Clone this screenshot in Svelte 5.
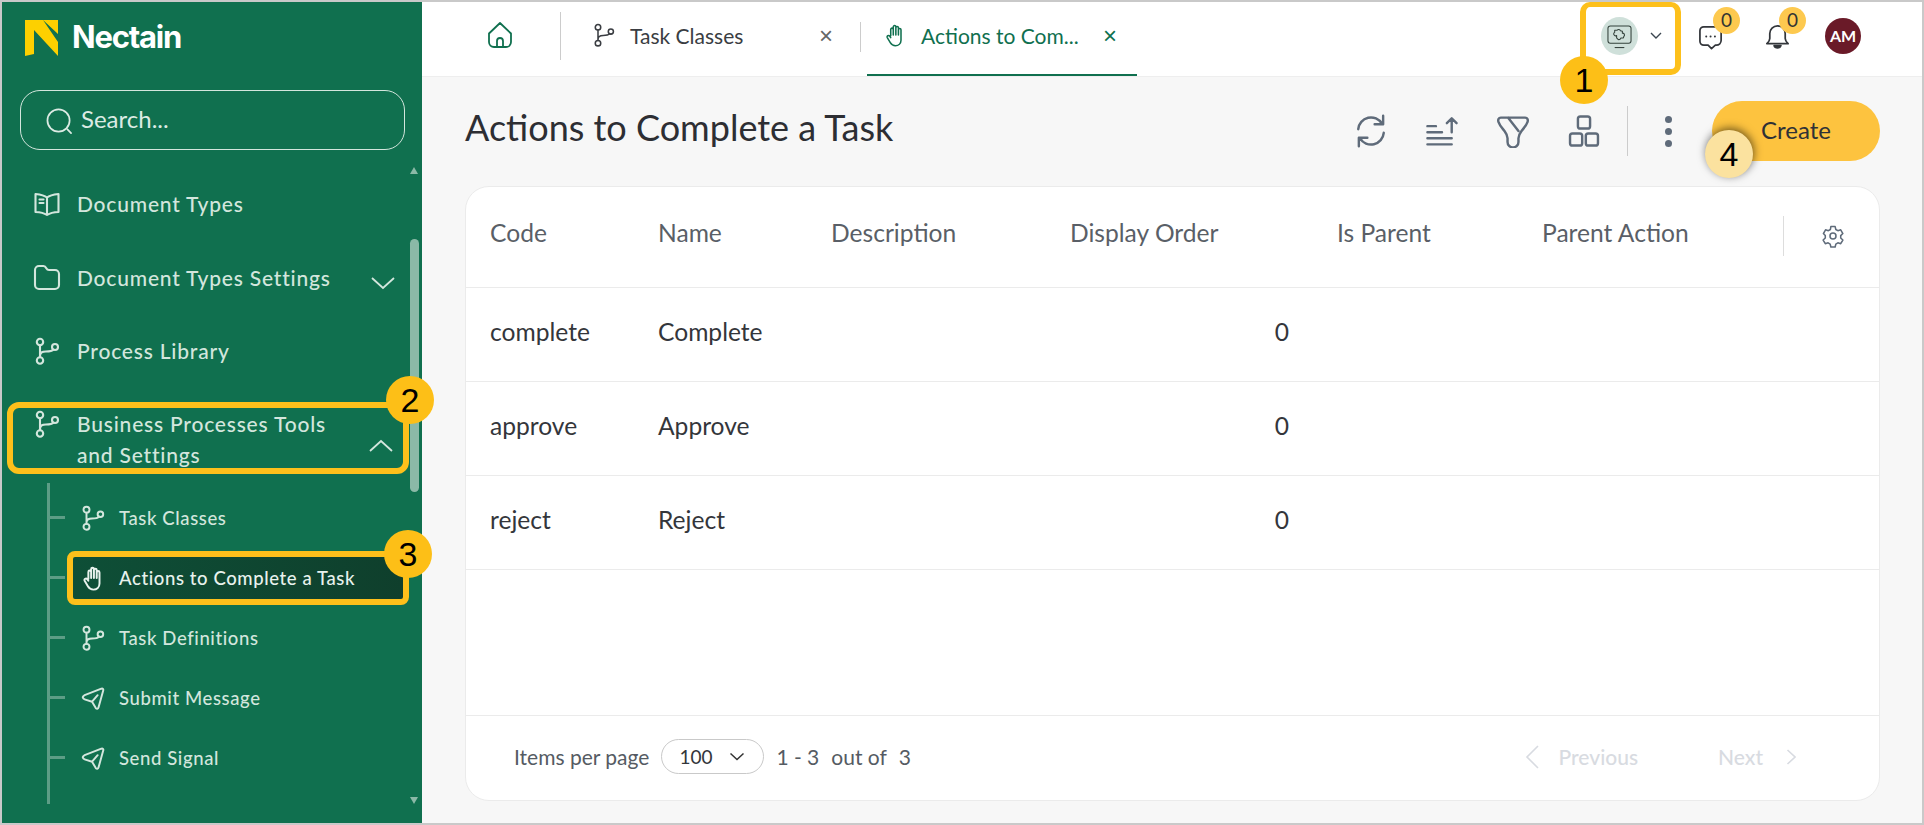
<script lang="ts">
	const columns = ['Code', 'Name', 'Description', 'Display Order', 'Is Parent', 'Parent Action'];
	const rows = [
		{ code: 'complete', name: 'Complete', order: 0 },
		{ code: 'approve', name: 'Approve', order: 0 },
		{ code: 'reject', name: 'Reject', order: 0 }
	];
	const subItems = [
		{ label: 'Task Classes', icon: 'branch' },
		{ label: 'Actions to Complete a Task', icon: 'hand', active: true },
		{ label: 'Task Definitions', icon: 'branch' },
		{ label: 'Submit Message', icon: 'send' },
		{ label: 'Send Signal', icon: 'send' }
	];
</script>

{#snippet icon(name: string, size = 28)}
	<svg class="icon" width={size} height={size} viewBox="0 0 28 28" fill="none" stroke="currentColor" stroke-width="1.8" stroke-linecap="round" stroke-linejoin="round">
		{#if name === 'branch'}
			<circle cx="7" cy="5" r="3.200" />
			<circle cx="7" cy="23.500" r="3.200" />
			<circle cx="22" cy="10" r="3" />
			<path d="M7 8.200V20.300M7 19c0-3.500 2-4.500 6-4.500 4 0 6.500-.8 7.500-2" />
		{:else if name === 'hand'}
			<path d="M9 15V7.500a1.500 1.500 0 0 1 3 0V14M12 13V4.500a1.500 1.500 0 0 1 3 0V14M15 13V5.500a1.500 1.500 0 0 1 3 0V14M18 14V8a1.500 1.500 0 0 1 3 0v12c0 4-3 6.500-6.500 6.500-3 0-4.500-1-6-3.500L5 17c-1-2 1.500-3.200 3-1.500l1 1.500" />
		{:else if name === 'send'}
			<path d="M3 13.500C3 12 4 11.500 5 11L23 4c1.500-.5 2.500.5 2 2l-5 18c-.5 2-2 2-3 .8l-4-6.800-8-2.500c-1-.3-2-1-2-2.500zM13 18l6-7" />
		{:else if name === 'book'}
			<path d="M14 7.500C11 5 7 4.500 2.500 4v18c4.500.2 8.500 1 11.500 3 3-2 7-2.800 11.500-3V4C21 4.500 17 5 14 7.500zM14 7.500V25M6.500 9.500h4M6.500 13h4" />
		{:else if name === 'folder'}
			<path d="M2 7a4 4 0 0 1 4-4h4.500c1.500 0 2.200 1 3 2.500.5 1 1.200 1.500 2.500 1.500h6a4 4 0 0 1 4 4v11a4 4 0 0 1-4 4H6a4 4 0 0 1-4-4z" />
		{:else if name === 'refresh'}
			<path d="M3.500 12.500A10.500 10.500 0 0 1 23 8M24.500 15.500A10.500 10.500 0 0 1 5 20M24 1.500V8.500H17M4 26.500V19.500H11" />
		{:else if name === 'sort'}
			<path d="M2 25h20M2 20h20M2 15h12M2 10h7M22 15V4M18 7.500 22 3.500l4 4" />
		{:else if name === 'funnel'}
			<path d="M4 3h20c2 0 2.500 2 2 3.500-1 3-3 5-5 7.500-1.500 2-2.500 3.500-2.500 6v3a4.500 4.500 0 0 1-9 0v-3c0-2.500-1-4-2.500-6-2-2.500-4-4.500-5-7.500C1.500 5 2 3 4 3zM10 3l8.500 11" />
		{:else if name === 'grid'}
			<rect x="9" y="2" width="10" height="10" rx="2" />
			<rect x="2.500" y="16" width="10" height="10" rx="2" />
			<rect x="15.500" y="16" width="10" height="10" rx="2" />
		{:else if name === 'gear'}
			<circle cx="14" cy="14" r="3.500" />
			<path d="M11.500 3h5l.8 3.400 2.400 1.400 3.300-1 2.500 4.300-2.500 2.400v2.800l2.500 2.400-2.500 4.300-3.300-1-2.400 1.400-.8 3.400h-5l-.8-3.400-2.400-1.400-3.300 1-2.500-4.300 2.500-2.400v-2.800L2.800 11.100l2.500-4.300 3.300 1 2.400-1.400z" />
		{:else if name === 'home'}
			<path d="M3 12.500 14 2l11 10.500V21a5 5 0 0 1-5 5H8a5 5 0 0 1-5-5zM11 26v-6a3 3 0 0 1 6 0v6" />
		{:else if name === 'chat'}
			<path d="M6 4h13a5 5 0 0 1 5 5v9a5 5 0 0 1-5 5h-1l-4 3.500L10.500 23H6a4 4 0 0 1-4-4V8a4 4 0 0 1 4-4z" />
			<path d="M8.500 14h.1M13 14h.1M17.500 14h.1" stroke-width="2" />
		{:else if name === 'bell'}
			<path d="M14 3a8 8 0 0 0-8 8v5c0 2-1.500 4-3 5.500h22c-1.500-1.500-3-3.500-3-5.500v-5a8 8 0 0 0-8-8z" />
			<path d="M10.500 23.500c1 3 6 3 7 0z" fill="currentColor" />
		{:else if name === 'search'}
			<circle cx="13" cy="13" r="11.500" />
			<path d="M22 22l4 4" />
		{/if}
	</svg>
{/snippet}

<div class="frame">
	<aside class="sidebar">
		<div class="brand">
			<svg width="33" height="36" viewBox="0 0 33 36"><path fill="#fdd000" d="M0 0h18l15 22v14L9 10v24l-9 2zM18 0h15v14z" /></svg>
			<span>Nectain</span>
		</div>
		<div class="search">
			<span class="search-icon">{@render icon('search', 27)}</span>
			<span class="search-text">Search...</span>
		</div>

		<nav class="nav">
			<div class="nav-item">{@render icon('book')}<span>Document Types</span></div>
			<div class="nav-item">
				{@render icon('folder')}<span>Document Types Settings</span>
				<svg class="chev" width="24" height="14" viewBox="0 0 24 14" fill="none" stroke="currentColor" stroke-width="1.800"><path d="M1 2l11 10L23 2" /></svg>
			</div>
			<div class="nav-item">{@render icon('branch')}<span>Process Library</span></div>
			<div class="nav-item open">
				{@render icon('branch')}<span>Business Processes Tools<br />and Settings</span>
				<svg class="chev" width="24" height="14" viewBox="0 0 24 14" fill="none" stroke="currentColor" stroke-width="1.800"><path d="M1 12 12 2l11 10" /></svg>
				<i class="mark mark-2">2</i>
			</div>
			<ul class="sub">
				{#each subItems as item}
					<li class:active={item.active}>
						<span class="tick"></span>
						<div class="sub-row">
							{@render icon(item.icon, 26)}<span>{item.label}</span>
							{#if item.active}<i class="mark mark-3">3</i>{/if}
						</div>
					</li>
				{/each}
			</ul>
		</nav>

		<div class="scrollbar">
			<span class="arrow up"></span>
			<span class="thumb"></span>
			<span class="arrow down"></span>
		</div>
	</aside>

	<main class="main">
		<header class="topbar">
			<div class="home">{@render icon('home', 28)}</div>
			<div class="tab">
				{@render icon('branch', 24)}
				<span class="tab-label">Task Classes</span>
				<span class="close">×</span>
			</div>
			<div class="tab current">
				{@render icon('hand', 24)}
				<span class="tab-label">Actions to Com...</span>
				<span class="close">×</span>
			</div>
			<div class="top-right">
				<div class="workspace">
					<span class="workspace-icon">
						<svg viewBox="0 0 26 26" fill="none" stroke="#33413b" stroke-width="1.100" stroke-linejoin="round">
							<rect x="1" y="2" width="24" height="18" rx="2.500" />
							<path d="M8 24.500h10" />
							<path d="M8 6.500h2.500a2 2 0 0 1 3.500 0.500l2 .5v2a2 2 0 0 1 1.500 3.500l-.5 1.500h-2.500a2 2 0 0 1-3.500 1l-1-1v-2.500a2 2 0 0 1-2-3.500z" />
						</svg>
					</span>
					<svg width="12" height="8" viewBox="0 0 12 8" fill="none" stroke="#3b4650" stroke-width="1.400"><path d="M1 1l5 5 5-5" /></svg>
					<i class="mark mark-1">1</i>
				</div>
				<div class="notify">{@render icon('chat', 27)}<b>0</b></div>
				<div class="notify">{@render icon('bell', 27)}<b>0</b></div>
				<span class="avatar">AM</span>
			</div>
		</header>

		<section class="content">
			<div class="page-head">
				<h1>Actions to Complete a Task</h1>
				<div class="tools">
					<div class="tool-icons">
						{@render icon('refresh', 34)}
						{@render icon('sort', 34)}
						{@render icon('funnel', 34)}
						{@render icon('grid', 34)}
					</div>
					<span class="tool-divider"></span>
					<span class="dots"><i></i><i></i><i></i></span>
					<button class="create">Create<i class="mark mark-4">4</i></button>
				</div>
			</div>

			<div class="card">
				<div class="row head">
					{#each columns as col}
						<span>{col}</span>
					{/each}
					<span class="settings">{@render icon('gear', 24)}</span>
				</div>
				{#each rows as row}
					<div class="row body">
						<span>{row.code}</span>
						<span>{row.name}</span>
						<span></span>
						<span class="num">{row.order}</span>
						<span></span>
						<span></span>
					</div>
				{/each}
				<div class="spacer"></div>
				<footer class="pager">
					<span class="per-page">Items per page</span>
					<span class="select">100
						<svg width="16" height="9" viewBox="0 0 16 9" fill="none" stroke="#333" stroke-width="1.500"><path d="M1.500 1.500 8 7.500l6.500-6" /></svg>
					</span>
					<span>1 - 3</span>
					<span>out of</span>
					<span>3</span>
					<div class="pager-nav">
						<svg width="14" height="24" viewBox="0 0 14 24" fill="none" stroke="currentColor" stroke-width="1.600"><path d="M13 1 2 12l11 11" /></svg>
						<span class="prev">Previous</span>
						<span class="next">Next</span>
						<svg width="10" height="16" viewBox="0 0 10 16" fill="none" stroke="currentColor" stroke-width="1.600"><path d="M1.500 1 9 8l-7.500 7" /></svg>
					</div>
				</footer>
			</div>
		</section>
	</main>
</div>

<style>
	:global(body) {
		margin: 0;
		background: #fff;
	}

	.frame {
		box-sizing: border-box;
		width: 1924px;
		height: 825px;
		border: 2px solid #c9c9c9;
		display: flex;
		overflow: hidden;
		font-family: Lato, 'Noto Sans', sans-serif;
		color: #2f3136;
	}

	.icon {
		flex-shrink: 0;
		display: block;
	}

	i {
		font-style: normal;
	}

	/* numbered callouts */
	.mark {
		position: absolute;
		width: 48px;
		height: 48px;
		border-radius: 50%;
		background: #fdbf17;
		color: #000;
		font: 400 34px/48px 'Liberation Sans', Arial, sans-serif;
		text-align: center;
		letter-spacing: 0;
		z-index: 5;
	}

	.sidebar {
		width: 420px;
		flex-shrink: 0;
		background: #10704f;
		color: #d3e6dd;
		position: relative;
		display: flex;
		flex-direction: column;
	}

	.brand {
		display: flex;
		align-items: center;
		gap: 14px;
		height: 36px;
		padding: 18px 0 0 23px;
		color: #fff;
		font: 700 31px Inter, sans-serif;
		letter-spacing: -1.200px;
	}

	.brand span {
		margin-top: -3px;
	}

	.search {
		box-sizing: border-box;
		margin: 34px 0 0 18px;
		width: 385px;
		height: 60px;
		border: 1px solid #d3e6dd;
		border-radius: 20px;
		display: flex;
		align-items: center;
		gap: 8px;
		padding-left: 25px;
		font-size: 24px;
		color: #dcebe4;
	}

	.search-icon {
		display: block;
		margin-top: 2px;
	}

	.search-text {
		padding-bottom: 3px;
	}

	.nav {
		margin-top: 17px;
		font-size: 21px;
		font-weight: 500;
		letter-spacing: 0.8px;
	}

	.nav .icon {
		stroke-width: 2.1;
	}

	.nav-item {
		position: relative;
		display: flex;
		align-items: center;
		gap: 16px;
		height: 73.500px;
		padding-left: 31px;
	}

	.chev {
		position: absolute;
		left: 369px;
		top: 35px;
	}

	.nav-item.open {
		box-sizing: border-box;
		margin: 14px 0 0 5px;
		width: 402px;
		height: 72px;
		padding-left: 20px;
		border: 6px solid #fdc01b;
		border-radius: 12px;
		line-height: 31px;
		align-items: flex-start;
	}

	.nav-item.open .icon {
		margin-top: 2px;
	}

	.nav-item.open .chev {
		left: 356px;
		top: 31px;
	}

	.mark-2 {
		left: 373px;
		top: -32px;
	}

	.sub {
		position: relative;
		box-sizing: border-box;
		list-style: none;
		margin: 9px 0 0 45px;
		padding: 5px 0 0;
		border-left: 3px solid #5d9d86;
		height: 321px;
		font-size: 18.500px;
		letter-spacing: 0.6px;
	}

	.sub li {
		position: relative;
		height: 60px;
		display: flex;
		align-items: center;
	}

	.tick {
		width: 15px;
		height: 3px;
		background: #5d9d86;
		margin-top: -1px;
	}

	.sub-row {
		position: relative;
		flex: 1;
		display: flex;
		align-items: center;
		gap: 13px;
		padding-left: 15px;
		height: 54px;
	}

	.sub li.active .sub-row {
		box-sizing: border-box;
		margin-left: 2px;
		margin-right: 13px;
		padding-left: 7px;
		border: 6px solid #fdc01b;
		border-radius: 8px;
		background: linear-gradient(90deg, #0e4f37, #0f3f2c);
		color: #e8f2ed;
	}

	.mark-3 {
		right: -29px;
		top: -27px;
	}

	.scrollbar {
		position: absolute;
		left: 408px;
		top: 162px;
		width: 9px;
		height: 642px;
	}

	.thumb {
		position: absolute;
		top: 75px;
		width: 9px;
		height: 253px;
		border-radius: 5px;
		background: #8bb9a7;
	}

	.arrow {
		position: absolute;
		left: 0;
		border-left: 4.500px solid transparent;
		border-right: 4.500px solid transparent;
	}

	.arrow.up {
		top: 3px;
		border-bottom: 7px solid #8bb9a7;
	}

	.arrow.down {
		bottom: 2px;
		border-top: 7px solid #8bb9a7;
	}

	.main {
		flex: 1;
		display: flex;
		flex-direction: column;
		min-width: 0;
		background: #f7f7f7;
	}

	.topbar {
		height: 74px;
		flex-shrink: 0;
		background: #fff;
		display: flex;
		align-items: flex-start;
		border-bottom: 1px solid #eee;
		position: relative;
	}

	.home {
		width: 116px;
		margin-top: 10px;
		border-right: 1px solid #ccc;
		display: flex;
		align-items: center;
		justify-content: center;
		padding: 0 2px 2px 20px;
		box-sizing: content-box;
		height: 46px;
		color: #10704f;
	}

	.tab {
		position: relative;
		display: flex;
		align-items: center;
		height: 74px;
		box-sizing: border-box;
		font-size: 21px;
		padding-bottom: 8px;
		color: #3a3d42;
	}

	.tab:nth-child(2) {
		width: 300px;
		padding-left: 31px;
	}

	.tab:nth-child(2)::after {
		content: '';
		position: absolute;
		right: 0;
		top: 20px;
		height: 30px;
		width: 1px;
		background: #ccc;
	}

	.tab-label {
		margin-left: 14px;
	}

	.close {
		position: absolute;
		font: 300 24px 'Liberation Sans', sans-serif;
		color: #666;
		right: 28px;
		top: 20px;
	}

	.tab.current {
		width: 270px;
		margin-left: 6px;
		padding-left: 16px;
		color: #10704f;
		border-bottom: 2px solid #10704f;
		padding-bottom: 6px;
	}

	.tab.current .close {
		right: 20px;
		color: #10704f;
	}

	.top-right {
		position: absolute;
		left: 1158px;
		top: 0;
		display: flex;
		align-items: flex-start;
		height: 73px;
	}

	.workspace {
		position: relative;
		box-sizing: border-box;
		width: 101px;
		height: 73px;
		border: 6px solid #fdc01b;
		border-top-width: 5px;
		border-radius: 10px;
		display: flex;
		align-items: center;
		gap: 12px;
		padding-left: 15px;
		padding-bottom: 4px;
	}

	.workspace-icon {
		width: 37px;
		height: 38px;
		border-radius: 50%;
		background: #cfe0da;
		display: flex;
		align-items: center;
		justify-content: center;
	}

	.workspace-icon svg {
		width: 25px;
		height: 25px;
	}

	.mark-1 {
		left: -26px;
		top: 49px;
	}

	.notify {
		position: relative;
		margin: 21px 0 0 17px;
		width: 50px;
		color: #33363b;
	}

	.notify + .notify {
		margin-left: 16px;
	}

	.notify b {
		position: absolute;
		left: 15px;
		top: -16px;
		width: 27px;
		height: 27px;
		border-radius: 50%;
		background: #fdc94f;
		font-size: 19px;
		font-weight: 400;
		line-height: 26px;
		text-align: center;
		color: #333;
	}

	.avatar {
		width: 36px;
		height: 36px;
		margin: 16px 0 0 11px;
		border-radius: 50%;
		background: #6a1a28;
		color: #fff;
		font-size: 16px;
		font-weight: 700;
		line-height: 36px;
		text-align: center;
	}

	.content {
		flex: 1;
		padding: 0 42px 22px 43px;
		display: flex;
		flex-direction: column;
		min-height: 0;
	}

	.page-head {
		height: 109px;
		flex-shrink: 0;
		display: flex;
		align-items: flex-start;
		justify-content: space-between;
	}

	h1 {
		margin: 28px 0 0;
		font-size: 36px;
		font-weight: 400;
		color: #2d2e33;
	}

	.tools {
		display: flex;
		align-items: center;
		margin-top: 24px;
		color: #5f6b7a;
		gap: 26px;
	}

	.tool-icons {
		display: flex;
		gap: 37px;
		margin-right: 3px;
	}

	.tool-icons .icon {
		stroke-width: 2;
	}

	.tool-divider {
		width: 1px;
		height: 50px;
		background: #ccc;
		margin: 0 -1px 0 -3px;
	}

	.dots {
		display: flex;
		flex-direction: column;
		gap: 5px;
		margin: 0 14px 0 12px;
	}

	.dots i {
		width: 7px;
		height: 7px;
		border-radius: 50%;
		background: #5f6b7a;
	}

	.create {
		position: relative;
		width: 168px;
		height: 60px;
		border: 0;
		border-radius: 30px;
		background: #fdc33f;
		font: 400 24px Lato, sans-serif;
		color: #2f3136;
		padding: 0 0 4px 0;
	}

	.mark-4 {
		left: -7px;
		top: 29px;
		background: #fbe29f;
		box-shadow: 1px -2px 8px rgba(0, 0, 0, 0.55);
	}

	.card {
		flex: 1;
		display: flex;
		flex-direction: column;
		background: #fff;
		border: 1px solid #ebebeb;
		border-radius: 24px;
		min-height: 0;
	}

	.row {
		display: grid;
		grid-template-columns: 168px 173px 239px 267px 205px 1fr;
		align-items: center;
		padding-left: 24px;
		font-size: 24.600px;
		border-bottom: 1px solid #ebebeb;
		position: relative;
		color: #34363b;
	}

	.row.head {
		height: 101px;
		color: #5a5f67;
		padding-bottom: 9px;
		box-sizing: border-box;
	}

	.row.body {
		height: 94px;
		box-sizing: border-box;
		padding-bottom: 6px;
	}

	.num {
		text-align: right;
		padding-right: 48px;
	}

	.settings {
		position: absolute;
		left: 1317px;
		top: 29px;
		height: 40px;
		padding-left: 37px;
		display: flex;
		align-items: center;
		border-left: 1px solid #ddd;
		color: #5f6b7a;
	}

	.spacer {
		flex: 1;
		border-bottom: 1px solid #ebebeb;
	}

	.pager {
		height: 84px;
		flex-shrink: 0;
		display: flex;
		align-items: center;
		gap: 12px;
		padding: 0 0 3px 48px;
		box-sizing: border-box;
		font-size: 21px;
		color: #555b63;
	}

	.select {
		box-sizing: border-box;
		width: 103px;
		height: 35px;
		border: 1px solid #c9c9c9;
		border-radius: 18px;
		display: flex;
		align-items: center;
		gap: 17px;
		padding-left: 17px;
		color: #33363b;
		font-size: 19px;
	}

	.pager-nav {
		margin-left: auto;
		display: flex;
		align-items: center;
		color: #d8dbe1;
		padding-right: 83px;
		font-weight: 500;
	}

	.prev {
		margin-left: 20px;
	}

	.next {
		margin: 0 23px 0 80px;
	}
</style>
